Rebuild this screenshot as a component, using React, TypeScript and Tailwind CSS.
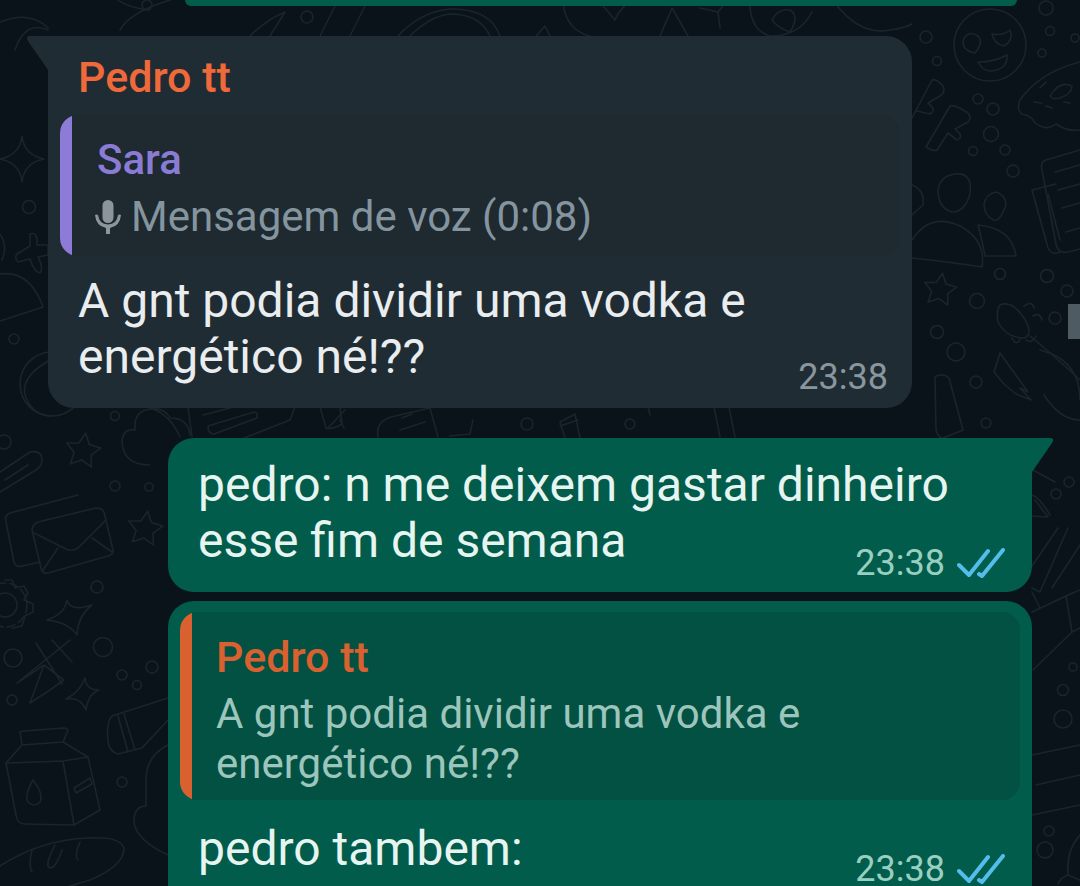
const circles = [
  [926, 37, 6], [937, 61, 4.5], [1046, 8, 7], [1050, 31, 4.5], [1075, 38, 4], [1042, 53, 4], [978, 99, 5], [993, 109, 6],
  [991, 134, 7.5], [973, 151, 4.5], [1005, 150, 5], [1013, 171, 6], [1000, 274, 5.5], [1047, 276, 6.5], [1067, 291, 6],
  [977, 301, 7.5], [937, 332, 6.5], [1055, 318, 6], [956, 352, 9], [976, 382, 6], [986, 423, 5], [1069, 482, 5], [1056, 494, 5],
  [115, 416, 4.5], [115, 486, 5], [149, 487, 4], [97, 587, 6], [4, 442, 7], [103, 647, 9.5], [13, 658, 9], [152, 667, 6],
  [122, 675, 5], [137, 685, 4.5], [12, 700, 5], [122, 782, 5], [29, 207, 6.5], [14, 339, 5], [1063, 690, 5.5], [1063, 719, 9],
  [1073, 667, 4], [1049, 831, 5], [1045, 850, 8], [307, 17, 6], [147, 5, 5], [630, 424, 5], [527, 424, 6],
  [990, 45, 36], [52, 384, 32], [5, 605, 12],
];

const doodles = [
  // heart eyes face
  'M964 38 Q970 30 978 36 Q984 42 975 53 Q960 50 964 38Z',
  'M992 34 Q1003 36 1010 30 Q1014 40 1004 46 Q994 44 992 34Z',
  'M978 62 Q995 62 1007 55 Q1008 70 990 71 Q982 70 978 62Z',
  // F shapes
  'M912 118 L932 80 Q936 78 943 86 Q946 92 940 96 L928 103 L933 108 Q934 112 930 114 L917 111',
  'M926 147 L950 106 Q954 104 968 113 Q972 118 968 122 L955 129 L960 134 Q962 138 957 140 L948 133 L937 150 Q934 152 926 147Z',
  // donut
  'M1080 62 Q1040 72 1020 100 Q1016 110 1022 114 Q1032 116 1034 122 Q1046 132 1056 124 Q1068 132 1080 130',
  'M1050 96 Q1060 80 1072 86 Q1072 94 1060 98 Q1052 100 1050 96Z',
  'M1040 88 L1046 82 M1034 102 L1042 103 M1046 106 L1052 108 M1064 102 L1070 103',
  // book
  'M1080 150 L1046 160 Q1040 162 1042 170 L1056 244 Q1058 254 1068 252 L1080 249',
  'M1056 184 L1032 190 L1048 248 Q1052 256 1060 252',
  'M1048 194 L1060 240 M1055 172 L1080 165 M1058 190 L1080 184 M1062 208 L1080 203 M1066 232 L1080 228',
  // people
  'M955 174 Q973 172 970 194 Q965 212 952 212 Q938 208 938 190 Q940 176 955 174Z',
  'M996 192 Q1006 195 1006 205 Q1000 222 994 220 Q984 216 984 204 Q986 194 996 192Z',
  'M912 258 Q950 262 982 267 Q986 240 960 226 Q930 212 912 240',
  'M978 225 Q1012 228 1016 256 L985 256 Q982 240 978 225Z',
  'M912 185 Q925 190 923 205 L912 215',
  // star and brush
  'M1000 305 Q1012 300 1024 318 Q1034 334 1024 338 Q1006 338 998 322 Q996 310 1000 305Z',
  'M1024 306 Q1032 300 1034 308 M1033 316 Q1040 312 1042 320 M1036 336 Q1032 344 1026 340 M1020 340 Q1016 346 1012 338',
  'M1030 336 Q1050 352 1080 380',
  // lightning
  'M1000 353 L1028 392 L1020 388 L1031 400 L1016 394 L1004 384 L994 372 Z',
  'M1040 350 Q1080 360 1080 400 M1044 395 Q1060 420 1080 420',
  // pill
  'M935 377 Q942 372 949 378 L963 430 L943 438 Q938 438 936 430Z',
  // desk items, between bubbles
  'M1033 470 L1055 482 M1032 495 Q1040 498 1050 515 M1030 516 L1048 517 L1035 500',
  'M1068 528 L1040 592 L1032 588 M1080 545 L1052 588 M1058 528 L1032 566',
  // left side: plus, dome, four-star
  'M22 136 Q24 155 44 159 Q24 163 22 182 Q20 163 0 159 Q20 155 22 136Z',
  'M30 234 Q38 231 37 245 L48 245 L48 255 L38 257 Q44 268 40 273 Q34 272 30 259 L18 262 Q14 258 17 254 L30 246Z',
  'M0 274 Q30 270 43 307 L0 321',
  'M0 234 Q8 246 2 260',
  'M50 360 Q18 378 26 398 Q34 416 52 416',
  'M0 22 Q30 10 48 28 M15 50 Q25 20 48 30',
  // cloud
  'M150 465 Q122 465 122 440 Q124 428 135 430 Q133 410 152 409 Q165 408 170 418 Q188 418 190 435',
  // paperclip
  'M0 472 L30 452 Q42 450 42 460 Q42 466 36 470 L0 492 M5 480 L28 465',
  // envelopes
  'M78 495 L10 513 Q4 516 6 522 L14 562 Q16 568 22 566 L40 562',
  'M38 522 L96 508 Q102 508 104 512 L113 550 Q114 554 108 556 L48 573 Q42 574 41 568 L32 530 Q33 524 38 522Z',
  'M34 533 L66 549 Q72 552 78 548 L106 520 M58 548 L43 570 M92 538 L112 552',
  // gear, star
  'M5 580 L12 580 L15 588 L24 586 L28 593 L24 600 L33 604 L33 612 L25 616 L22 626 L12 628',
  'M67 600 Q70 612 92 605 Q78 616 77 635 Q68 622 47 620 Q65 614 67 600Z',
  // scissors and small star
  'M36 643 L62 684 M70 640 L17 683 L44 665 L30 703 L50 690 L64 680 L44 665 M52 640 L72 662',
  'M85 678 Q86 690 99 690 Q88 694 86 710 Q80 696 66 699 Q80 692 85 678Z',
  // milk carton
  'M20 732 L22 745 L63 742 L68 730 Q67 728 64 728 L24 731 Q20 731 20 732Z',
  'M22 745 L6 763 L16 815 Q17 824 25 824 L74 825 L100 810 L88 757 L63 742',
  'M6 763 L63 761 L88 757 M63 761 L74 825',
  'M33 780 Q24 796 28 802 Q34 808 40 802 Q44 794 33 780Z',
  'M74 788 L90 778 L92 784 L76 793Z',
  // bottle
  'M112 716 Q106 722 108 742 Q110 752 118 754 L142 748 L168 720 M124 714 L135 750 M118 716 L128 752 M112 716 L168 698',
  'M168 745 Q146 756 146 780 L146 806 Q134 806 134 822 Q136 840 168 855',
  // bread
  'M0 866 Q40 840 88 838 Q120 836 124 848 Q124 866 90 880 L70 886 M32 850 Q28 866 32 872 M55 845 Q44 866 50 868 Q56 868 62 850 M80 842 Q74 856 78 860',
  // between top bubbles
  'M118 0 Q128 8 150 10 M170 0 Q130 12 120 30',
  'M250 36 Q266 20 285 12 L270 36 M320 36 L338 0 M350 36 L368 0',
  'M398 36 Q420 12 450 9 Q490 8 500 36 M410 36 Q430 16 450 14 Q480 14 490 36',
  'M536 36 L545 26 L550 36 M563 3 Q566 30 590 36 M600 2 L615 20 Q620 8 630 2 M660 36 L672 8 L688 36',
  'M700 8 L718 12 L725 3 M718 12 L720 28 M750 3 Q750 30 770 36 Q800 36 812 12 M772 20 Q778 8 790 10 Q800 16 790 32 Q778 28 772 20Z',
  'M835 3 Q860 36 890 30 Q905 28 912 24',
  // between bubbles, middle gap
  'M150 408 Q170 414 180 437 M188 407 L192 437',
  'M203 415 L230 408 M208 426 L254 412 Q258 412 257 418 L214 434 Q208 434 208 426Z M244 438 L290 420 L295 407',
  'M320 407 L326 428 Q332 430 342 424 L340 407 M340 420 L344 428 M345 410 L328 428',
  'M378 437 Q375 420 395 416 L430 408 L438 437 M400 430 L425 422 M402 418 L412 414',
  'M450 436 L470 434 L473 420',
  'M565 438 L560 422 L575 414 L580 438 M560 426 L578 420',
  'M650 415 L648 407 M720 437 L714 407 M735 437 L729 407',
  // gap between outgoing bubble and page bottom right
  'M1032 612 L1066 596 L1080 590 M1033 670 L1072 632 L1080 628 M1066 596 L1072 632 M1032 592 L1040 608',
  'M1032 755 L1080 745 M1036 785 L1080 775 M1032 815 L1080 805',
  'M1080 835 Q1066 850 1068 875 Q1060 878 1058 884 M1068 875 L1080 880',
];

function starPath(cx: number, cy: number, r: number) {
  const pts: string[] = [];
  for (let i = 0; i < 10; i++) {
    const a = (Math.PI / 5) * i - Math.PI / 2 + 0.15;
    const rad = i % 2 === 0 ? r : r * 0.5;
    pts.push(`${cx + rad * Math.cos(a)} ${cy + rad * Math.sin(a)}`);
  }
  return `M${pts.join(' L')}Z`;
}

function Wallpaper() {
  return (
    <svg className="absolute inset-0" width="1080" height="886" fill="none" stroke="#1a252b" strokeWidth="1.6" strokeLinecap="round" strokeLinejoin="round">
      {circles.map(([cx, cy, r], idx) => (
        <circle key={idx} cx={cx} cy={cy} r={r} />
      ))}
      {doodles.map((d, idx) => (
        <path key={idx} d={d} />
      ))}
      <path d={starPath(83, 451, 18)} />
      <path d={starPath(145, 529, 18)} />
      <path d={starPath(940, 290, 17)} />
      <circle cx="5" cy="605" r="22" strokeDasharray="8 4" />
    </svg>
  );
}

function Ticks() {
  return (
    <svg width="48" height="30" viewBox="0 0 48 30" fill="none" stroke="#53bdeb" strokeWidth="4" strokeLinecap="round" strokeLinejoin="round">
      <path d="M2 17 L12 27 L31 3" />
      <path d="M22 26 L25 28 L46 2" />
    </svg>
  );
}

function Mic() {
  return (
    <svg width="26" height="34" viewBox="0 0 26 34" fill="#8b959b">
      <rect x="7.5" y="0" width="11" height="23" rx="5.5" />
      <path d="M0 15 Q1 14 3 15 Q4 24 13 24.5 Q22 24 23 15 Q25 14 26 15 Q25 26 15 28 L15 34 L11 34 L11 28 Q1 26 0 15Z" />
    </svg>
  );
}

export default function App() {
  return (
    <div className="relative h-[886px] w-[1080px] overflow-hidden bg-[#0a131a] font-['Roboto',sans-serif]">
      <Wallpaper />

      {/* scrollbar thumb */}
      <div className="absolute right-0 top-[304px] h-[35px] w-[12px] bg-[#4e5b62]" />

      <div className="relative flex flex-col">
        <div className="ml-[185px] h-[6px] w-[832px] rounded-b-[14px] bg-[#025c4b]" />

        {/* received */}
        <div className="relative ml-[48px] mt-[30px] w-[864px] rounded-b-[26px] rounded-tr-[26px] bg-[#202c33] pb-[23px]">
          <svg className="absolute -left-[22px] top-0" width="22" height="34" viewBox="0 0 22 34" fill="#202c33">
            <path d="M22 0 L4 0 Q-1 0 2 5 L22 34Z" />
          </svg>
          <div className="pl-[30px] pt-[19px] text-[43px] font-medium leading-[44px] text-[#f0693a]">Pedro tt</div>
          <div className="mx-[12px] mt-[16px] flex h-[141px] overflow-hidden rounded-[18px] bg-[#1e2930]">
            <div className="w-[12px] rounded-l-[18px] bg-[#8d7bd8]" />
            <div className="flex-1 pl-[25px]">
              <div className="mt-[23px] text-[42px] font-medium leading-[44px] text-[#8a7cd4]">Sara</div>
              <div className="mt-[13px] flex items-center text-[42px] leading-[44px] text-[#84959f]">
                <span className="-ml-[2px] mr-[10px]">
                  <Mic />
                </span>
                Mensagem de voz (0:08)
              </div>
            </div>
          </div>
          <div className="mt-[17px] flex items-end justify-between pl-[30px] pr-[24px] text-[48px] leading-[56px] text-[#e9edef]">
            <div className="w-0 flex-1 whitespace-nowrap">
              A gnt podia dividir uma vodka e
              <br />
              energético né!??
            </div>
            <div className="-mb-[12px] shrink-0 text-[36px] leading-[40px] text-[#8a969e]">23:38</div>
          </div>
        </div>

        {/* sent */}
        <div className="relative ml-[168px] mt-[30px] w-[864px] rounded-b-[26px] rounded-tl-[26px] bg-[#025c4b] pb-[23px] pl-[30px] pr-[27px] pt-[19px]">
          <svg className="absolute -right-[22px] top-0" width="22" height="34" viewBox="0 0 22 34" fill="#025c4b">
            <path d="M0 0 L18 0 Q23 0 20 5 L0 34Z" />
          </svg>
          <div className="flex items-end justify-between text-[48px] leading-[56px] text-[#e7f5f1]">
            <div className="w-0 flex-1 whitespace-nowrap">
              pedro: n me deixem gastar dinheiro
              <br />
              esse fim de semana
            </div>
            <div className="-mb-[14px] flex shrink-0 items-center gap-[12px] text-[36px] leading-[40px] text-[#99cfc1]">
              23:38
              <Ticks />
            </div>
          </div>
        </div>

        <div className="ml-[168px] mt-[9px] h-[320px] w-[864px] rounded-[26px] bg-[#025c4b] pt-[11px]">
          <div className="mx-[12px] flex h-[188px] overflow-hidden rounded-[18px] bg-[#025143]">
            <div className="w-[12px] rounded-l-[18px] bg-[#d9612f]" />
            <div className="flex-1 pl-[24px]">
              <div className="mt-[23px] text-[43px] font-medium leading-[44px] text-[#d9612f]">Pedro tt</div>
              <div className="mt-[10px] text-[42px] leading-[50px] text-[#9cc5bb]">
                A gnt podia dividir uma vodka e
                <br />
                energético né!??
              </div>
            </div>
          </div>
          <div className="mt-[21px] flex items-start justify-between pl-[30px] pr-[27px] text-[48px] leading-[56px] text-[#e7f5f1]">
            <div>pedro tambem:</div>
            <div className="mt-[31px] flex shrink-0 items-center gap-[12px] text-[36px] leading-[34px] text-[#99cfc1]">
              23:38
              <Ticks />
            </div>
          </div>
        </div>
      </div>
    </div>
  );
}
